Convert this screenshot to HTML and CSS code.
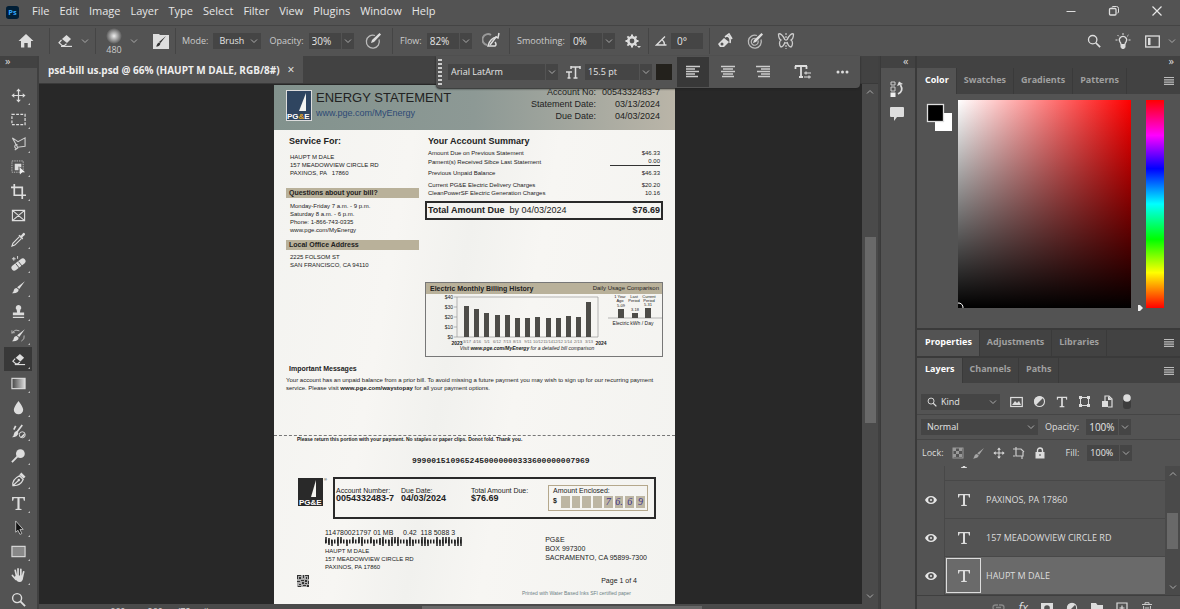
FILE: index.html
```html
<!DOCTYPE html>
<html lang="en">
<head>
<meta charset="utf-8">
<title>psd-bill us.psd</title>
<link rel="stylesheet" href="styles.css">
</head>
<body>
<svg class="defs" width="0" height="0" aria-hidden="true">
	<symbol id="chev" viewBox="0 0 8 8"><path d="M1 2.500l3 3 3-3" fill="none" stroke="#aaa" stroke-width="1"/></symbol>
	<symbol id="menu" viewBox="0 0 10 8"><path d="M0 .5h10M0 2.800h10M0 5.100h10M0 7.400h10" stroke="#bbb" stroke-width="1.200"/></symbol>
	<symbol id="eye" viewBox="0 0 14 10"><path fill="#e6e6e6" fill-rule="evenodd" d="M7 1C4 1 2 3 1 5c1 2 3 4 6 4s5-2 6-4c-1-2-3-4-6-4zm0 1.200a2.800 2.800 0 1 1 0 5.600a2.800 2.800 0 0 1 0-5.600z"/><circle cx="7" cy="5" r="1" fill="#e6e6e6"/></symbol>
	<symbol id="tee" viewBox="0 0 14 14"><path fill="#ddd" d="M1 1h12v3.500h-1l-.6-2.300H8v9.600l1.800.3v.9H4.200v-.9l1.800-.3V2.200H2.600L2 4.500H1z"/></symbol>
	<symbol id="eraser" viewBox="0 0 16 16"><path fill="#ddd" d="M9.500 2l4.500 4-4 4-5-4z"/><path d="M4.500 7L2 9.800l3 2.700h2.500L9.500 10.700" fill="none" stroke="#ddd" stroke-width="1.200"/><path fill="#ddd" d="M4 12.800h11V14H4z"/></symbol>
	<symbol id="search" viewBox="0 0 16 16"><circle cx="6.500" cy="6.500" r="4.800" fill="none" stroke="#ddd" stroke-width="1.500"/><path d="M10 10l5 5" stroke="#ddd" stroke-width="2"/></symbol>
	<symbol id="brush" viewBox="0 0 16 16"><path fill="#ddd" d="M14.800 1.200L8.800 9.500 6.500 7.800zM6 8.500l2.200 1.800C8 13 5.500 14.500 1 14c1.500-.8 1.500-1.500 2-3 .5-1.600 1.500-2.500 3-2.500z"/></symbol>
	<symbol id="move" viewBox="0 0 16 16"><path d="M8 2.500v11M2.500 8h11" stroke="#ddd" stroke-width="1.300"/><path fill="#ddd" d="M8 .5l2.500 3h-5zM8 15.500l2.500-3h-5zM.5 8l3-2.500v5zM15.500 8l-3-2.500v5z"/></symbol>
	<symbol id="half" viewBox="0 0 14 14"><circle cx="7" cy="7" r="5.400" fill="none" stroke="#ddd" stroke-width="1.200"/><path d="M3 11A5.600 5.600 0 0 1 11 3z" fill="#ddd"/></symbol>
	<symbol id="dial" viewBox="0 0 18 18"><path d="M11 3.500a6.500 6.500 0 1 0 4 4" fill="none" stroke="#bbb" stroke-width="1.300"/><path d="M7 11l1-3 7.500-7 1.500 1.500-7 7.500z" fill="#ddd"/></symbol>
</svg>
<div class="app">

	<header class="menubar">
		<svg class="logo" viewBox="0 0 14 14"><rect width="14" height="14" rx="3" fill="#001e36"/><text x="2.500" y="10" font-size="8" font-weight="bold" fill="#31a8ff">Ps</text></svg>
		<nav class="menus">
			<button>File</button><button>Edit</button><button>Image</button><button>Layer</button><button>Type</button><button>Select</button><button>Filter</button><button>View</button><button>Plugins</button><button>Window</button><button>Help</button>
		</nav>
		<div class="wincontrols">
			<button aria-label="Minimize"><svg width="12" height="12"><path d="M1.500 6.500h9" stroke="#ddd"/></svg></button>
			<button aria-label="Restore"><svg width="12" height="12"><rect x="1.500" y="3.500" width="6.500" height="6.500" rx="1" fill="none" stroke="#ddd" stroke-width="1.300"/><path d="M4 2.500q0-1 1-1h3.500q2 0 2 2V7q0 1-1 1" fill="none" stroke="#ddd"/></svg></button>
			<button aria-label="Close"><svg width="12" height="12"><path d="M1.500 1.500l9 9M10.500 1.500l-9 9" stroke="#e6e6e6" stroke-width="1.200"/></svg></button>
		</div>
	</header>

	<div class="options">
		<div class="group home"><button aria-label="Home"><svg width="16" height="16"><path fill="#ddd" d="M8 1l7.500 7H13v6.500H9.700V10H6.300v4.500H3V8H.5z"/></svg></button></div>
		<div class="group pick"><button aria-label="Eraser tool"><svg width="16" height="16"><use href="#eraser"/></svg></button><svg width="8" height="8"><use href="#chev"/></svg></div>
		<div class="group brushes">
			<button class="size" aria-label="Brush size"><span class="tip"></span>480</button>
			<svg width="8" height="8"><use href="#chev"/></svg>
			<button class="gap" aria-label="Brush settings"><svg width="18" height="18"><path fill="#ddd" d="M1 2h6l1 1h9v14H1z"/><path d="M14 4L8.500 11 7 10zM7 10.500l1.500 1C8 14 6 14.500 4 14.500c1-1 1-3.500 3-4z" fill="#333"/></svg></button>
		</div>
		<div class="group mode">
			<label for="mode">Mode:</label>
			<span class="field w48"><select id="mode"><option>Brush</option></select><svg width="8" height="8"><use href="#chev"/></svg></span>
			<label for="opacity">Opacity:</label>
			<span class="field split w45"><input id="opacity" value="30%"><svg width="8" height="8"><use href="#chev"/></svg></span>
			<button class="gap" aria-label="Pressure for opacity"><svg width="18" height="18"><use href="#dial"/></svg></button>
		</div>
		<div class="group flow">
			<label for="flow">Flow:</label>
			<span class="field split w45"><input id="flow" value="82%"><svg width="8" height="8"><use href="#chev"/></svg></span>
			<button class="gap" aria-label="Airbrush"><svg width="18" height="18"><path d="M9 3a5.500 5.500 0 1 0-4 10" fill="none" stroke="#999" stroke-width="2"/><path d="M15 5Q8 6 6 14h7q2-1 0-4" fill="none" stroke="#ddd" stroke-width="1.500"/><path d="M17 1l-1 5-2-1-6 8" fill="none" stroke="#ddd" stroke-width="1.500"/></svg></button>
		</div>
		<div class="group smooth">
			<label for="smoothing">Smoothing:</label>
			<span class="field split w45"><input id="smoothing" value="0%"><svg width="8" height="8"><use href="#chev"/></svg></span>
			<button class="gap" aria-label="Smoothing options"><svg width="16" height="16"><circle cx="7" cy="8" r="3.700" fill="none" stroke="#ddd" stroke-width="2.600"/><path d="M7 1.500v3M7 11.500v3M.5 8h3M10.500 8h3M2.400 3.400l2 2M9.600 10.600l2 2M2.400 12.600l2-2M9.600 5.400l2-2" stroke="#ddd" stroke-width="2"/><path d="M12 13h4l-2 2z" fill="#ddd"/></svg></button>
		</div>
		<div class="group angle">
			<label for="angle" aria-label="Angle"><svg width="12" height="12"><path d="M10 1.500L1.500 10h10M7 4.500q2.500 2 2.500 5.500" fill="none" stroke="#ddd" stroke-width="1.300"/></svg></label>
			<span class="field w32"><input id="angle" value="0°"></span>
		</div>
		<div class="group extras">
			<button aria-label="Erase to history"><svg width="16" height="16"><path d="M1 11l6-6 5 4-5 5H3z" fill="#ddd"/><circle cx="5" cy="11" r="1.500" fill="#535353"/><path d="M8 4l4-3 3 5M10 3q4 1 3 7" fill="none" stroke="#ddd" stroke-width="1.600"/></svg></button>
			<button aria-label="Pressure for size"><svg width="18" height="18"><use href="#dial"/><path d="M10 6.500a3.500 3.500 0 1 0 2 2" fill="none" stroke="#bbb" stroke-width="1.200"/></svg></button>
			<button aria-label="Symmetry"><svg width="18" height="18"><path d="M8 8C6 3 3 1 1.500 2c0 3 .5 5 2.500 6-2 1-2 5 0 7 2 0 3-2 4-5M10 8c2-5 5-7 6.500-6 0 3-.5 5-2.500 6 2 1 2 5 0 7-2 0-3-2-4-5" fill="none" stroke="#ccc" stroke-width="1.300"/><path d="M9 1v16" stroke="#ddd" stroke-dasharray="2 1"/></svg></button>
		</div>
		<div class="right">
			<button aria-label="Search"><svg width="14" height="14"><use href="#search"/></svg></button>
			<button aria-label="Discover"><svg width="16" height="16"><path d="M6 11.500q0-1.500-1-2.500a3.600 3.600 0 1 1 6 0q-1 1-1 2.500z" fill="none" stroke="#ddd" stroke-width="1.200"/><path d="M6 12h4v2.500L8 16l-2-1.500zM8 0v2M2.500 2l1.300 1.300M13.500 2l-1.300 1.300M.5 7h2M13.500 7h2" fill="#ddd" stroke="#ddd"/></svg></button>
			<button aria-label="Workspace"><svg width="15" height="13"><rect x=".7" y="1" width="13.600" height="11" fill="none" stroke="#ddd" stroke-width="1.300"/><path d="M3 3h2.500v7H3z" fill="#ddd"/></svg></button>
			<svg width="8" height="8"><use href="#chev"/></svg>
		</div>
	</div>

	<div class="workspace">
		<aside class="tools">
			<div class="collapse">»</div>
			<div class="toollist">
				<button aria-label="Move"><svg viewBox="0 0 16 16"><use href="#move"/></svg></button>
				<button aria-label="Marquee"><svg viewBox="0 0 16 16"><rect x="1" y="2.500" width="14" height="11" fill="none" stroke="#ddd" stroke-width="1.300" stroke-dasharray="3 1.500"/></svg></button>
				<button aria-label="Lasso"><svg viewBox="0 0 16 16"><path d="M1.500 2l6 4L15 2v9l-8 1L1.500 2zM7 9.500a2 2 0 1 0 .5 3L4 15" fill="none" stroke="#ccc" stroke-width="1.200"/></svg></button>
				<button aria-label="Object selection"><svg viewBox="0 0 16 16"><rect x="1" y="1" width="12" height="12" fill="none" stroke="#bbb" stroke-dasharray="1.500 1"/><path d="M4 4h7v4L8 7v4H4z" fill="#ddd"/><path d="M9 7.500l6 5.500h-3l-2.500 2.500z" fill="#eee"/></svg></button>
				<button aria-label="Crop"><svg viewBox="0 0 16 16"><path d="M3.500 0v12H16M0 3.500h12V16" fill="none" stroke="#ddd" stroke-width="1.800"/></svg></button>
				<button class="plain" aria-label="Frame"><svg viewBox="0 0 16 16"><path d="M1.500 2.500h13v11h-13zM1.500 2.500l13 11M14.500 2.500l-13 11" fill="none" stroke="#ddd" stroke-width="1.200"/></svg></button>
				<button aria-label="Eyedropper"><svg viewBox="0 0 16 16"><path d="M9 5L2 12l-1 3 3-1 7-7" fill="none" stroke="#ddd" stroke-width="1.200"/><path d="M8 4l1-1 1.500 1L13 1q2-.5 2 2l-3 2.500L13 7l-1 1z" fill="#ddd"/></svg></button>
				<button aria-label="Healing brush"><svg viewBox="0 0 16 16"><path d="M3.500 12.500l9-7" stroke="#ddd" stroke-width="6" stroke-linecap="round"/><path d="M5 8l4 5M8 6l4 5" stroke="#535353"/><path d="M3 1v4M1 3h4M7 0v3" stroke="#ddd"/></svg></button>
				<button aria-label="Brush"><svg viewBox="0 0 16 16"><use href="#brush"/></svg></button>
				<button aria-label="Clone stamp"><svg viewBox="0 0 16 16"><path fill="#ddd" d="M8 1a3 3 0 0 1 2 5.200L9.500 9H14v3H2V9h4.500L6 6.200A3 3 0 0 1 8 1zM2 13.500h12V15H2z"/></svg></button>
				<button aria-label="History brush"><svg viewBox="0 0 16 16"><use href="#brush"/><path d="M1 6V2.500M1 5h3M2 4q3-3 7-1M14 8q1 4-3 6" fill="none" stroke="#bbb"/></svg></button>
				<button class="on" aria-label="Eraser"><svg viewBox="0 0 16 16"><use href="#eraser"/></svg></button>
				<button aria-label="Gradient"><svg viewBox="0 0 16 16"><defs><linearGradient id="g"><stop stop-color="#444"/><stop offset="1" stop-color="#ddd"/></linearGradient></defs><rect x="1" y="2.500" width="14" height="11" fill="url(#g)" stroke="#ddd" stroke-width="1.200"/></svg></button>
				<button aria-label="Blur"><svg viewBox="0 0 16 16"><path fill="#ddd" d="M8 1q5 6.500 5 9.500a5 4.700 0 0 1-10 0Q3 7.500 8 1z"/></svg></button>
				<button aria-label="Mixer brush"><svg viewBox="0 0 16 16"><path d="M12 1L6 9M5 2L3 6" stroke="#ddd" stroke-width="1.800"/><path d="M6 7.500l2 2Q7 14 1 14q2-1 2-3 .5-3 3-3.500z" fill="#ddd"/><circle cx="12" cy="11.500" r="3.200" fill="none" stroke="#ddd"/><path d="M10 14l4.500-4.500A3.500 3.500 0 0 1 10 14z" fill="#ddd"/></svg></button>
				<button aria-label="Dodge"><svg viewBox="0 0 16 16"><circle cx="10" cy="6" r="4.700" fill="#ddd"/><path d="M7 9l-6 6" stroke="#ddd" stroke-width="2"/></svg></button>
				<button aria-label="Pen"><svg viewBox="0 0 16 16"><path d="M2 14.500Q1 8 9 4l4 4q-3 7-11 6.500zM2 14.500L8 9" fill="none" stroke="#ddd" stroke-width="1.300"/><circle cx="8.300" cy="8.500" r="1.300" fill="#ddd"/><path d="M9 3l2-2.500L15.500 5 13.500 7z" fill="#ddd"/></svg></button>
				<button aria-label="Type"><svg viewBox="0 0 14 14"><use href="#tee"/></svg></button>
				<button aria-label="Path selection"><svg viewBox="0 0 16 16"><path d="M5 1l8 9H9.500l2 4.500-2 .8-2-4.300L5 13z" fill="#111" stroke="#ccc" stroke-width=".9"/></svg></button>
				<button aria-label="Rectangle"><svg viewBox="0 0 16 16"><rect x="1" y="2.500" width="14" height="11" fill="#888" stroke="#ddd" stroke-width="1.200"/></svg></button>
				<button aria-label="Hand"><svg viewBox="0 0 16 16"><path d="M1.500 8L5 12M4.500 2.500L6 9M7.500 1v8M10.500 1.500V9M13.500 4L12 10" stroke="#ddd" stroke-width="1.800" stroke-linecap="round"/><path d="M3.500 9.500L5.500 8h7.500q.5 7-4 7-3 0-5.500-5.500z" fill="#ddd"/></svg></button>
				<button class="plain" aria-label="Zoom"><svg viewBox="0 0 16 16"><use href="#search"/></svg></button>
			</div>
		</aside>

		<main class="document">
			<div class="doctabs"><div class="doctab">psd-bill us.psd @ 66% (HAUPT M DALE, RGB/8#)<button aria-label="Close tab">×</button></div></div>
			<div class="viewport">
				<div class="canvas">
					<article class="paper">
						<div class="billhead">
							<svg width="26" height="31"><rect x=".5" y=".5" width="25" height="30" fill="#2f4560" stroke="#ddd"/><path d="M13 21L20 3v18z" fill="#f4f4f0"/><text x="1" y="29" class="pge" fill="#fff">PG<tspan fill="#e0a526">&amp;</tspan>E</text></svg>
							<div class="billtitle"><h1>ENERGY STATEMENT</h1><a href="#">www.pge.com/MyEnergy</a></div>
							<dl><dt>Account No:</dt><dd>0054332483-7</dd><dt>Statement Date:</dt><dd>03/13/2024</dd><dt>Due Date:</dt><dd>04/03/2024</dd></dl>
						</div>
						<div class="billcols">
							<section class="service">
								<h2>Service For:</h2>
								<p class="addr">HAUPT M DALE<br>157 MEADOWVIEW CIRCLE RD<br>PAXINOS, PA &nbsp; 17860</p>
								<h3>Questions about your bill?</h3>
								<p>Monday-Friday 7 a.m. - 9 p.m.<br>Saturday 8 a.m. - 6 p.m.<br>Phone: 1-866-743-0335<br>www.pge.com/MyEnergy</p>
								<h3 class="office">Local Office Address</h3>
								<p>2225 FOLSOM ST<br>SAN FRANCISCO, CA 94110</p>
							</section>
							<section class="account">
								<h2>Your Account Summary</h2>
								<table>
									<tr><td>Amount Due on Previous Statement</td><td>$46.33</td></tr>
									<tr class="sum"><td>Pament(s) Received Sibce Last Statement</td><td><span>0.00</span></td></tr>
									<tr class="space"><td>Previous Unpaid Balance</td><td>$46.33</td></tr>
									<tr class="space"><td>Current PG&amp;E Electric Delivery Charges</td><td>$20.20</td></tr>
									<tr><td>CleanPowerSF Electric Generation Charges</td><td>10.16</td></tr>
								</table>
								<div class="total"><span><b>Total Amount Due</b>&nbsp; by 04/03/2024</span><b>$76.69</b></div>
								<div class="history">
									<div class="historyhead"><b>Electric Monthly Billing History</b><span>Daily Usage Comparison</span></div>
									<svg viewBox="0 0 236 62">
										<path d="M31 3h141v40H31M28 3h3M28 13h3M28 23h3M28 33h3M28 43h3M31 3v40M182 24h54" fill="none" stroke="#999" stroke-width=".7"/>
										<g fill="#4d4c48"><path d="M38 43V12h5v31zM48 43V15h5v28zM58 43V19h5v24zM69 43V21h5v22zM79 43V21h5v22zM89 43V24h5v19zM99 43V24h5v19zM109 43V23h5v20zM120 43V24h5v19zM130 43V24h5v19zM140 43V22h5v21zM150 43V23h5v20zM160 43V8h5v35zM192 24v-9h6v9zM206 24v-5h6v5zM219 24V14h6v10z"/></g>
										<g font-size="5" text-anchor="end"><text x="27" y="5">$40</text><text x="27" y="15">$30</text><text x="27" y="25">$20</text><text x="27" y="35">$10</text><text x="27" y="45">$0</text></g>
										<g font-size="4" text-anchor="middle" fill="#666"><text x="41" y="49">3/17</text><text x="51" y="49">4/16</text><text x="61" y="49">5/1</text><text x="71" y="49">6/12</text><text x="81" y="49">7/13</text><text x="91" y="49">8/13</text><text x="102" y="49">9/11</text><text x="112" y="49">10/12</text><text x="122" y="49">11/14</text><text x="132" y="49">12/12</text><text x="142" y="49">1/14</text><text x="152" y="49">2/13</text><text x="163" y="49">3/13</text></g>
										<g font-size="5" font-weight="bold" text-anchor="middle"><text x="31" y="51">2023</text><text x="175" y="51">2024</text></g>
										<text x="101" y="56" font-size="5" font-style="italic" text-anchor="middle">Visit <tspan font-weight="bold">www.pge.com/MyEnergy</tspan> for a detailed bill comparison</text>
										<g font-size="4" text-anchor="middle"><text x="194" y="4">1 Year</text><text x="208" y="4">Last</text><text x="223" y="4">Current</text><text x="194" y="8">Ago</text><text x="208" y="8">Period</text><text x="223" y="8">Period</text><text x="195" y="13">5.09</text><text x="209" y="17">3.18</text><text x="222" y="12">5.31</text></g>
										<text x="207" y="31" font-size="5" text-anchor="middle">Electric kWh / Day</text>
									</svg>
								</div>
							</section>
						</div>
						<section class="messages"><h4>Important Messages</h4><p>Your account has an unpaid balance from a prior bill. To avoid missing a future payment you may wish to sign up for our recurring payment service. Please visit <b>www.pge.com/waystopay</b> for all your payment options.</p></section>
						<section class="stub">
							<p class="return">Please return this portion with your payment. No staples or paper clips. Donot fold. Thank you.</p>
							<p class="ocr">9990015109652450000000333600000007969</p>
							<div class="slip">
								<svg width="30" height="30"><path d="M0 1h25v28H0z" fill="#292929"/><path d="M13 20L18 3v17z" fill="#f4f4f0"/><text x="1" y="28" class="pge" fill="#fff">PG&amp;E</text><text x="26" y="4" font-size="4">®</text></svg>
								<div class="slipbox">
									<p>Account Number:<b>0054332483-7</b></p>
									<p>Due Date:<b>04/03/2024</b></p>
									<p>Total Amount Due:<b>$76.69</b></p>
									<div class="enclosed">Amount Enclosed:<div class="cells"><b>$</b><i></i><i></i><i></i><i></i><i>7</i><i>6.</i><i>6</i><i>9</i></div></div>
								</div>
							</div>
							<div class="mailing">
								<div>
									<p>114780021797 01 MB &nbsp; &nbsp; 0.42 &nbsp;118 5088 3</p>
									<svg width="138" height="9"><g stroke="#222" stroke-width="1.500"><path d="M0 4.500h138" stroke-width="4" stroke-dasharray="1.500 1.500"/><path d="M1 0v6M4 1v7M7 3v6M13 0v9M16 0v6M22 3v6M28 0v6M34 0v6M37 0v9M46 0v6M49 3v6M55 1v7M58 0v9M64 3v6M67 0v9M70 0v6M73 0v9M82 3v6M85 0v9M88 3v6M97 0v9M100 0v9M103 3v6M112 0v9M115 3v6M118 0v9M121 0v6M124 0v9M130 3v6M133 0v9M136 0v9"/></g></svg>
									<p class="mailto">HAUPT M DALE<br>157 MEADOWVIEW CIRCLE RD<br>PAXINOS, PA 17860</p>
								</div>
								<p class="remit">PG&amp;E<br>BOX 997300<br>SACRAMENTO, CA 95899-7300</p>
							</div>
							<div class="billfoot">
								<svg width="12" height="12"><rect width="12" height="12" fill="#aaa"/><path d="M0 0h4v1H1v3H0zM2 2h2v2H2zM6 0h1v3H6zM8 0h4v4h-1V1H8zM9 2h1v2H9zM0 6h3v1H0zM4 5h3v1H4zM8 5h2v2H8zM11 6h1v3h-1zM5 7h2v2H5zM0 8h1v4h3v-1H1V8zM2 9h2v1H2zM6 10h3v1H6zM8 8h2v1H8zM10 10h2v2h-2z" fill="#333"/></svg>
								<p>Page 1 of 4<small>Printed with Water Based Inks SFI certified paper</small></p>
							</div>
						</section>
					</article>
				</div>
				<div class="vscroll"><svg width="8" height="8" class="up"><use href="#chev"/></svg><span></span><svg width="8" height="8"><use href="#chev"/></svg></div>
			</div>
			<div class="status"><span>660 px x 960 px (72 ppi)</span><div></div></div>

			<div class="typebar">
				<span class="grip"></span>
				<span class="field split w110"><input aria-label="Font" value="Arial LatArm"><svg width="8" height="8"><use href="#chev"/></svg></span>
				<label for="ptsize" aria-label="Font size"><svg width="16" height="14"><path d="M6 2h9M10.500 2v11M8.500 13h4M6 1v3M15 1v3M1 7h6M4 7v6M2.500 13h3" stroke="#ddd" stroke-width="1.500"/></svg></label>
				<span class="field split w67"><input id="ptsize" value="15.5 pt"><svg width="8" height="8"><use href="#chev"/></svg></span>
				<button class="ink" aria-label="Text color"></button>
				<button class="align on" aria-label="Align left"><svg width="14" height="14"><path d="M0 1.500h14M0 4h9M0 6.500h13M0 9h9M0 11.500h12" stroke="#ccc" stroke-width="1.300"/></svg></button>
				<button class="align" aria-label="Align center"><svg width="14" height="14"><path d="M0 1.500h14M2 4h10M0 6.500h14M2 9h10M1 11.500h12" stroke="#ccc" stroke-width="1.300"/></svg></button>
				<button class="align" aria-label="Align right"><svg width="14" height="14"><path d="M0 1.500h14M5 4h9M1 6.500h13M5 9h9M2 11.500h12" stroke="#ccc" stroke-width="1.300"/></svg></button>
				<button class="textopts" aria-label="Text options"><svg width="18" height="16"><path d="M1 2h12M7 2v11M5 13h4M1.500 2v3M12.500 2v3" stroke="#ddd" stroke-width="1.800"/><path d="M10 9h7M10 13h7M12 7.500v3M15 11.500v3" stroke="#ddd" stroke-width="1.200"/></svg></button>
				<button aria-label="More"><svg width="13" height="4"><circle cx="2" cy="2" r="1.500" fill="#ddd"/><circle cx="6.500" cy="2" r="1.500" fill="#ddd"/><circle cx="11" cy="2" r="1.500" fill="#ddd"/></svg></button>
			</div>
		</main>

		<aside class="dock">
			<div class="collapse">«</div>
			<div class="dockicons">
				<button aria-label="History"><svg width="16" height="18"><path d="M2 2h4v3H2zM2 7h4v4H2z" fill="none" stroke="#ccc"/><path d="M1.500 12.500h5V17h-5z" fill="#eee"/><path d="M9 14q6-3 2.500-9" fill="none" stroke="#ddd" stroke-width="1.700"/><path d="M8 6l2-4.500L14 4z" fill="#ddd"/></svg></button>
				<button aria-label="Comments"><svg width="16" height="14"><path d="M2 0h12q1 0 1 1v8q0 1-1 1H8l-3 4v-4H2q-1 0-1-1V1q0-1 1-1z" fill="#ddd"/></svg></button>
			</div>
		</aside>

		<aside class="panels">
			<div class="collapse end">»</div>
			<div class="tabs"><button class="on">Color</button><button>Swatches</button><button>Gradients</button><button>Patterns</button><svg width="10" height="8"><use href="#menu"/></svg></div>
			<div class="color">
				<svg class="swatch" width="28" height="32"><path d="M10 13h17v18H10z" fill="#fff"/><rect x="2.500" y="4.500" width="16" height="17" fill="#000" stroke="#ddd" stroke-width="1.300"/></svg>
				<div class="field2d"><svg width="8" height="8"><path d="M0 3a4.500 4.500 0 0 1 5 5" fill="none" stroke="#fff"/></svg></div>
				<div class="huebox"><svg width="7" height="8"><path d="M1 1h2l3 3-3 3H1z" fill="#eee"/></svg><div class="hue"></div></div>
			</div>
			<div class="tabs props"><button class="on">Properties</button><button>Adjustments</button><button>Libraries</button><svg width="10" height="8"><use href="#menu"/></svg></div>
			<div class="tabs"><button class="on">Layers</button><button>Channels</button><button>Paths</button><svg width="10" height="8"><use href="#menu"/></svg></div>
			<div class="row filter">
				<span class="field w79"><svg width="10" height="10"><use href="#search"/></svg><select aria-label="Filter type"><option>Kind</option></select><svg width="8" height="8"><use href="#chev"/></svg></span>
				<button aria-label="Pixel layers"><svg width="13" height="12"><rect x=".7" y="1.500" width="11.600" height="9" fill="none" stroke="#ddd" stroke-width="1.200"/><path d="M2 9l3-4 2 2 2-2 2 4z" fill="#ddd"/></svg></button>
				<button aria-label="Adjustment layers"><svg width="13" height="13"><use href="#half"/></svg></button>
				<button aria-label="Type layers"><svg width="12" height="12"><use href="#tee"/></svg></button>
				<button aria-label="Shape layers"><svg width="13" height="13"><rect x="2.500" y="2.500" width="8" height="8" fill="none" stroke="#ddd"/><path d="M1 1h3v3H1zM9 1h3v3H9zM1 9h3v3H1zM9 9h3v3H9z" fill="#ddd"/></svg></button>
				<button aria-label="Smart objects"><svg width="12" height="13"><path d="M4 6V1h4l3 3v8H7" fill="none" stroke="#ddd" stroke-width="1.200"/><path d="M1 6h6v6H1zM7 1v4h4z" fill="#ddd"/></svg></button>
				<button aria-label="Toggle filter"><svg width="8" height="16"><rect x="0" y="2" width="8" height="13" rx="3" fill="#3d3d3d"/><circle cx="4" cy="4" r="3.800" fill="#ddd"/></svg></button>
			</div>
			<div class="row blend">
				<span class="field w117"><select aria-label="Blend mode"><option>Normal</option></select><svg width="8" height="8"><use href="#chev"/></svg></span>
				<label for="lop">Opacity:</label><span class="field split w45"><input id="lop" value="100%"><svg width="8" height="8"><use href="#chev"/></svg></span>
			</div>
			<div class="row lock">
				<span>Lock:</span>
				<button aria-label="Lock transparency"><svg width="12" height="12"><rect x="1" y="1" width="10" height="10" fill="none" stroke="#999"/><path d="M1 1h3v3H1zM7 1h3v3H7zM4 4h3v3H4zM1 7h3v3H1zM7 7h3v3H7z" fill="#999"/></svg></button>
				<button aria-label="Lock pixels"><svg width="13" height="13" opacity=".6"><use href="#brush"/></svg></button>
				<button aria-label="Lock position"><svg width="12" height="12"><use href="#move"/></svg></button>
				<button aria-label="Lock artboard"><svg width="13" height="12"><path d="M3 0v9h7V5M0 2h8l3 3M9 9v3M2 9H0" fill="none" stroke="#ccc" stroke-width="1.200"/></svg></button>
				<button aria-label="Lock all"><svg width="12" height="12"><path d="M1.500 5h9v6.500h-9z" fill="#ddd"/><path d="M3.500 5V3.500a2.500 2.500 0 0 1 5 0V5" fill="none" stroke="#ddd" stroke-width="1.400"/><path d="M6 7v2" stroke="#444"/></svg></button>
				<label for="fill">Fill:</label><span class="field split w45"><input id="fill" value="100%"><svg width="8" height="8"><use href="#chev"/></svg></span>
			</div>
			<div class="layers">
				<ul>
					<li class="cut"><span class="eye"></span><span class="thumb"><svg width="14" height="14"><use href="#tee"/></svg></span></li>
					<li><span class="eye"><svg width="14" height="10"><use href="#eye"/></svg></span><span class="thumb"><svg width="14" height="14"><use href="#tee"/></svg></span>PAXINOS, PA 17860</li>
					<li><span class="eye"><svg width="14" height="10"><use href="#eye"/></svg></span><span class="thumb"><svg width="14" height="14"><use href="#tee"/></svg></span>157 MEADOWVIEW CIRCLE RD</li>
					<li class="on"><span class="eye"><svg width="14" height="10"><use href="#eye"/></svg></span><span class="thumb"><svg width="14" height="14"><use href="#tee"/></svg></span>HAUPT M DALE</li>
				</ul>
				<div class="vscroll small"><svg width="8" height="8" class="up"><use href="#chev"/></svg><span></span><svg width="8" height="8"><use href="#chev"/></svg></div>
			</div>
			<div class="layerbar">
				<button aria-label="Link"><svg width="13" height="12"><path d="M6 3H3.500a2.500 2.500 0 0 0 0 5H6M7 3h2.500a2.500 2.500 0 0 1 0 5H7M4 5.500h5" fill="none" stroke="#888" stroke-width="1.300"/></svg></button>
				<button class="fx" aria-label="Effects">fx</button>
				<button aria-label="Mask"><svg width="12" height="12"><path d="M0 1h12v10H0z" fill="#ddd"/><circle cx="6" cy="6" r="2.800" fill="#535353"/></svg></button>
				<button aria-label="Adjustment"><svg width="12" height="12"><use href="#half"/></svg></button>
				<button aria-label="Group"><svg width="12" height="12"><path d="M0 1h5l1.500 2H12v8H0z" fill="#ddd"/></svg></button>
				<button aria-label="New layer"><svg width="12" height="12"><path d="M1 1h10v10H1zM6 3.500v5M3.500 6h5" fill="none" stroke="#ddd" stroke-width="1.200"/></svg></button>
				<button aria-label="Delete"><svg width="12" height="12"><path d="M1 2.500h10M4 2V.7h4V2M2.500 4l.5 8h6l.5-8M5 5v6M7 5v6" fill="none" stroke="#ccc"/></svg></button>
			</div>
		</aside>
	</div>
</div>
</body>
</html>
```
FILE: styles.css
```css
* {
	box-sizing: border-box;
	margin: 0;
	padding: 0;
}

body {
	background: #535353;
	color: #ddd;
	font: 10px/14px "Open Sans", "Noto Sans", sans-serif;
	overflow: hidden;
}

button, input, select {
	font: inherit;
	color: inherit;
	background: none;
	border: 0;
	border-radius: 0;
	outline: 0;
	appearance: none;
}

button {
	display: flex;
	align-items: center;
	justify-content: center;
}

svg {
	display: block;
	flex: none;
}

.defs {
	position: absolute;
}

ul {
	list-style: none;
}

.app {
	height: 100vh;
	display: flex;
	flex-direction: column;
}

/* menu bar */
.menubar {
	flex: none;
	height: 25px;
	display: flex;
	align-items: center;
	padding-left: 6px;
}

.logo {
	width: 13px;
	height: 13px;
}

.menus {
	display: flex;
	flex: 1;
	gap: 10px;
	padding-left: 13px;
	padding-bottom: 3px;
	font-size: 11px;
	color: #e6e6e6;
}

.wincontrols {
	display: flex;
	gap: 31px;
	padding: 0 17px 4px 0;
}

/* options bar */
.options {
	flex: none;
	height: 31px;
	display: flex;
	align-items: center;
	border-top: 1px solid #444;
	color: #ccc;
}

.group {
	flex: none;
	display: flex;
	align-items: center;
	height: 26px;
	border-right: 1px solid #454545;
}

.group label {
	flex: none;
	padding-right: 5px;
	font-size: 9px;
}

.home {
	width: 50px;
	padding-left: 18px;
}

.pick {
	width: 46px;
	padding-left: 7px;
	gap: 8px;
}

.brushes {
	width: 80px;
	padding-left: 6px;
	gap: 4px;
}

.size {
	flex-direction: column;
	width: 24px;
	font-size: 9px;
	line-height: 11px;
}

.tip {
	width: 16px;
	height: 16px;
	border-radius: 50%;
	background: radial-gradient(#eee, #777 55%, #535353 70%);
}

.mode {
	width: 217px;
	padding-left: 6px;
}

.mode .w48 {
	margin-right: 8px;
}

.flow {
	width: 117px;
	padding-left: 7px;
}

.smooth {
	width: 139px;
	padding-left: 7px;
}

.angle {
	width: 61px;
	padding-left: 6px;
}

.angle label {
	padding-right: 4px;
}

.extras {
	border: 0;
	gap: 13px;
	padding-left: 7px;
}

.gap {
	margin-left: 10px;
}

.right {
	display: flex;
	align-items: center;
	gap: 14px;
	margin-left: auto;
	padding-right: 4px;
}

.right > svg {
	margin-left: -6px;
}

.field {
	flex: none;
	display: flex;
	align-items: center;
	height: 16px;
	padding: 0 3px 0 6px;
	background: #454545;
	color: #e6e6e6;
}

.field input, .field select {
	flex: 1;
	min-width: 0;
	width: 20px;
}

.field select {
	font-size: 9px;
}

.split {
	padding: 0 2px 0 3px;
}

.split svg {
	box-sizing: content-box;
	padding: 4px 0 4px 2px;
	border-left: 1px solid #535353;
}

.w32 { width: 32px; }
.w45 { width: 45px; }
.w48 { width: 48px; }
.w67 { width: 67px; }
.w79 { width: 79px; }
.w110 { width: 110px; }
.w117 { width: 117px; }

/* workspace */
.workspace {
	flex: 1;
	min-height: 0;
	display: flex;
	background: #404040;
}

.collapse {
	flex: none;
	height: 12px;
	padding-left: 5px;
	background: #424242;
	font-size: 11px;
	line-height: 10px;
}

.end {
	text-align: right;
	padding-right: 6px;
}

.tools {
	flex: none;
	width: 37px;
	display: flex;
	flex-direction: column;
}

.toollist {
	flex: 1;
	min-height: 0;
	padding: 15px 4px 0;
	background: #535353;
}

.toollist button {
	position: relative;
	width: 28px;
	height: 24px;
}

.toollist svg {
	width: 15px;
	height: 15px;
}

.toollist .on {
	background: #383838;
}

.toollist button::after {
	content: "";
	position: absolute;
	right: 2px;
	bottom: 2px;
	border: 1px solid #bbb;
	border-left-color: transparent;
	border-top-color: transparent;
}

.toollist .plain::after {
	display: none;
}

.document {
	position: relative;
	flex: 1;
	min-width: 0;
	display: flex;
	flex-direction: column;
	padding: 0 2px;
}

.doctabs {
	flex: none;
	height: 28px;
	display: flex;
	background: #424242;
	border-bottom: 1px solid #3a3a3a;
}

.doctab {
	display: flex;
	align-items: center;
	gap: 8px;
	padding: 0 9px;
	background: #535353;
	color: #eee;
	font-weight: bold;
}

.doctab button {
	font-weight: normal;
	font-size: 12px;
}

.viewport {
	flex: 1;
	min-height: 0;
	display: flex;
}

.canvas {
	flex: 1;
	display: flex;
	padding: 1px 0 0 235px;
	background: #282828;
	overflow: hidden;
}

.vscroll {
	flex: none;
	width: 16px;
	display: flex;
	flex-direction: column;
	align-items: center;
	justify-content: space-between;
	padding: 4px 0;
	background: #4a4a4a;
}

.vscroll span {
	width: 11px;
	height: 186px;
	background: #696969;
}

.vscroll:not(.small) span {
	margin-bottom: 28px;
}

.up {
	transform: rotate(180deg);
}

.status {
	flex: none;
	height: 5px;
	display: flex;
	background: #4a4a4a;
	overflow: hidden;
}

.status span {
	flex: none;
	width: 383px;
	padding: 1px 0 0 71px;
	font-size: 9px;
}

.status div {
	flex: 1;
	max-width: 280px;
	margin-top: 2px;
	background: #696969;
}

/* floating type bar */
.typebar {
	position: absolute;
	top: 0;
	right: 20px;
	width: 424px;
	height: 32px;
	display: flex;
	align-items: center;
	background: #535353;
	box-shadow: 0 1px 2px #222;
	border-radius: 0 0 4px 4px;
}

.grip {
	width: 4px;
	height: 26px;
	margin: 0 6px 0 2px;
	background: repeating-linear-gradient(#ccc 0 2px, #535353 2px 4px);
}

.typebar .field {
	font-size: 9px;
}

.typebar label {
	padding: 0 4px 0 7px;
}

.ink {
	width: 16px;
	height: 16px;
	margin: 0 5px 0 4px;
	background: #23211c;
}

.align {
	width: 32px;
	height: 30px;
	margin-right: 3px;
}

.typebar .on {
	background: #383838;
}

.textopts {
	margin: 0 24px 0 12px;
}

/* the bill */
.paper {
	flex: none;
	width: 401px;
	background: linear-gradient(100deg, #f3f3f0, #f7f6f3 30%, #f1f1ee 45%, #f7f6f3 60%, #f3f3f0);
	color: #222;
	font: 6px/8px "Liberation Sans", Arial, sans-serif;
}

.paper h2 {
	font-size: 9px;
	line-height: 12px;
}

.billhead {
	display: flex;
	height: 45px;
	padding: 5px 15px 0 12px;
	background: linear-gradient(90deg, #82928d, #8d9995 50%, #bab5a8);
	font-size: 9px;
}

.pge {
	font: bold 8px "Liberation Sans", sans-serif;
}

.billtitle {
	flex: 1;
	padding-left: 4px;
}

.billtitle h1 {
	font-size: 13px;
	font-weight: normal;
	line-height: 15px;
}

.billtitle a {
	display: block;
	color: #2e4a75;
	line-height: 16px;
	text-decoration: none;
}

.billhead dl {
	display: grid;
	grid-template-columns: auto 64px;
	align-content: start;
	margin-top: -4px;
	line-height: 12px;
	text-align: right;
}

.billcols {
	display: flex;
	gap: 6px;
	padding: 5px 12px 0;
}

.service {
	width: 133px;
}

.service h2, .account h2 {
	padding-left: 3px;
}

.service p {
	padding-left: 4px;
}

.service .addr {
	margin: 6px 0 11px;
}

.service h3 {
	height: 10px;
	margin-bottom: 4px;
	padding-left: 3px;
	background: #b9b19a;
	font-size: 7px;
	line-height: 10px;
}

.service .office {
	margin: 6px 0 3px;
}

.account {
	flex: 1;
}

.account table {
	width: 100%;
	margin-top: 2px;
	border-collapse: collapse;
}

.account td {
	padding: 0 3px;
}

.account td:last-child {
	text-align: right;
}

.account .sum span {
	display: inline-block;
	width: 50px;
	border-bottom: 1px solid #333;
}

.space td {
	padding-top: 4px;
}

.account .sum + .space td {
	padding-top: 3px;
}

.total {
	display: flex;
	justify-content: space-between;
	margin-top: 4px;
	border: 2px solid #2a2a2a;
	padding: 0 1px;
	font-size: 9px;
	line-height: 15px;
}

.history {
	margin-top: 62px;
	border: 1px solid #777;
}

.history svg {
	width: 100%;
	fill: #222;
}

.historyhead {
	display: flex;
	justify-content: space-between;
	padding: 0 3px 0 4px;
	background: #b9b19a;
	line-height: 11px;
}

.historyhead b {
	font-size: 7px;
}

.messages {
	height: 78px;
	padding: 8px 15px 0 12px;
}

.messages h4 {
	padding: 0 0 3px 3px;
	font-size: 7px;
}

.stub {
	border-top: 1px dashed #777;
}

.return {
	padding-left: 23px;
	font-weight: bold;
	font-size: 5px;
	line-height: 7px;
}

.ocr {
	margin: 13px 0 11px;
	padding-left: 138px;
	font: bold 8px/10px "Liberation Mono", monospace;
}

.slip {
	display: flex;
	gap: 5px;
	padding: 0 19px 0 24px;
}

.slipbox {
	flex: 1;
	display: flex;
	height: 42px;
	padding: 6px 6px 0 1px;
	border: 2px solid #2a2a2a;
	font-size: 7px;
}

.slipbox p {
	flex: none;
	width: 65px;
	padding-top: 2px;
	line-height: 7px;
}

.slipbox p:nth-child(2) {
	width: 70px;
}

.slipbox p b {
	display: block;
	font-size: 9px;
	line-height: 9px;
}

.enclosed {
	width: 100px;
	height: 26px;
	margin-left: auto;
	padding: 0 2px 0 4px;
	border: 1px solid #b5a88c;
	line-height: 10px;
}

.cells {
	display: flex;
	gap: 2px;
}

.cells b {
	width: 6px;
}

.cells i {
	width: 9px;
	height: 12px;
	background: #bdb6a3;
	color: #40348a;
	font: italic 10px/12px "Liberation Serif", serif;
	text-align: center;
}

.mailing {
	display: flex;
	justify-content: space-between;
	padding: 10px 28px 0 51px;
	font-size: 7px;
}

.mailto {
	padding-top: 1px;
	font-size: 6px;
}

.remit {
	padding-top: 6px;
	line-height: 9px;
}

.billfoot {
	display: flex;
	justify-content: space-between;
	padding: 4px 38px 0 23px;
	text-align: right;
	font-size: 7px;
	line-height: 12px;
}

.billfoot small {
	display: block;
	padding-right: 6px;
	color: #6d8286;
	font-size: 5px;
}

/* icon dock */
.dock {
	flex: none;
	width: 37px;
	display: flex;
	flex-direction: column;
	padding: 0 2px 0 1px;
	background: #3a3a3a;
}

.dock .collapse {
	padding-left: 22px;
}

.dockicons {
	flex: 1;
	padding: 12px 8px 0;
	background: #535353;
}

.dockicons button {
	margin-bottom: 9px;
}

/* right panels */
.panels {
	flex: none;
	width: 263px;
	display: flex;
	flex-direction: column;
	background: #535353;
}

.tabs {
	flex: none;
	display: flex;
	align-items: stretch;
	height: 26px;
	background: #424242;
	font-weight: bold;
	font-size: 9px;
	color: #a0a0a0;
}

.tabs button {
	padding: 0 7px 3px;
	border-right: 1px solid #3a3a3a;
}

.tabs .on {
	background: #535353;
	color: #fff;
	padding-left: 8px;
}

.tabs svg {
	margin: 9px 6px 0 auto;
}

.color {
	flex: none;
	height: 234px;
	display: flex;
	padding: 6px 16px 20px 8px;
}

.swatch {
	margin-right: 5px;
}

.field2d {
	flex: 1;
	display: flex;
	align-items: flex-end;
	background: linear-gradient(transparent, #000), linear-gradient(90deg, #fff, #f00);
}

.huebox {
	display: flex;
	align-items: flex-end;
	gap: 2px;
	padding-left: 6px;
}

.huebox svg {
	margin-bottom: -4px;
}

.hue {
	width: 18px;
	height: 100%;
	background: linear-gradient(#f00, #f0f 17%, #00f 33%, #0ff 50%, #0f0 67%, #ff0 83%, #f00);
}

.props {
	height: 29px;
	border-top: 2px solid #3a3a3a;
	border-bottom: 1px solid #3a3a3a;
}

.panels .props + .tabs {
	border-top: 1px solid #3a3a3a;
}

.row {
	flex: none;
	display: flex;
	align-items: center;
	padding-left: 4px;
	border-bottom: 1px solid #454545;
}

.row label, .lock > span {
	font-size: 9px;
}

.row .field span {
	font-size: 10px;
}

.filter {
	height: 32px;
	gap: 10px;
	padding-top: 6px;
}

.filter .field {
	gap: 4px;
}

.blend {
	height: 25px;
	gap: 7px;
}

.lock {
	height: 26px;
	gap: 8px;
	padding-left: 5px;
	border: 0;
}

.lock label {
	margin-left: 12px;
}

.layers {
	flex: 1;
	min-height: 0;
	display: flex;
	font-size: 9px;
}

.layers ul {
	flex: 1;
	display: flex;
	flex-direction: column;
	justify-content: flex-end;
	overflow: hidden;
}

.layers li {
	flex: none;
	height: 38px;
	display: flex;
	align-items: center;
	border-bottom: 1px solid #484848;
}

.eye {
	width: 28px;
	height: 38px;
	display: flex;
	align-items: center;
	justify-content: center;
	border-right: 1px solid #484848;
	background: #535353;
}

.thumb {
	width: 35px;
	height: 35px;
	display: flex;
	align-items: center;
	justify-content: center;
	margin: 0 5px 0 1px;
}

.layers .on {
	background: #6a6a6a;
}

.on .thumb {
	border: 1px solid #ddd;
}

.small {
	width: 15px;
}

.small span {
	height: 36px;
}

.layerbar {
	flex: none;
	height: 14px;
	display: flex;
	align-items: flex-start;
	justify-content: flex-end;
	gap: 13px;
	padding: 6px 27px 0 0;
	border-top: 1px solid #3f3f3f;
	overflow: hidden;
}

.fx {
	font: italic 12px/12px "Open Sans", sans-serif;
}
```
